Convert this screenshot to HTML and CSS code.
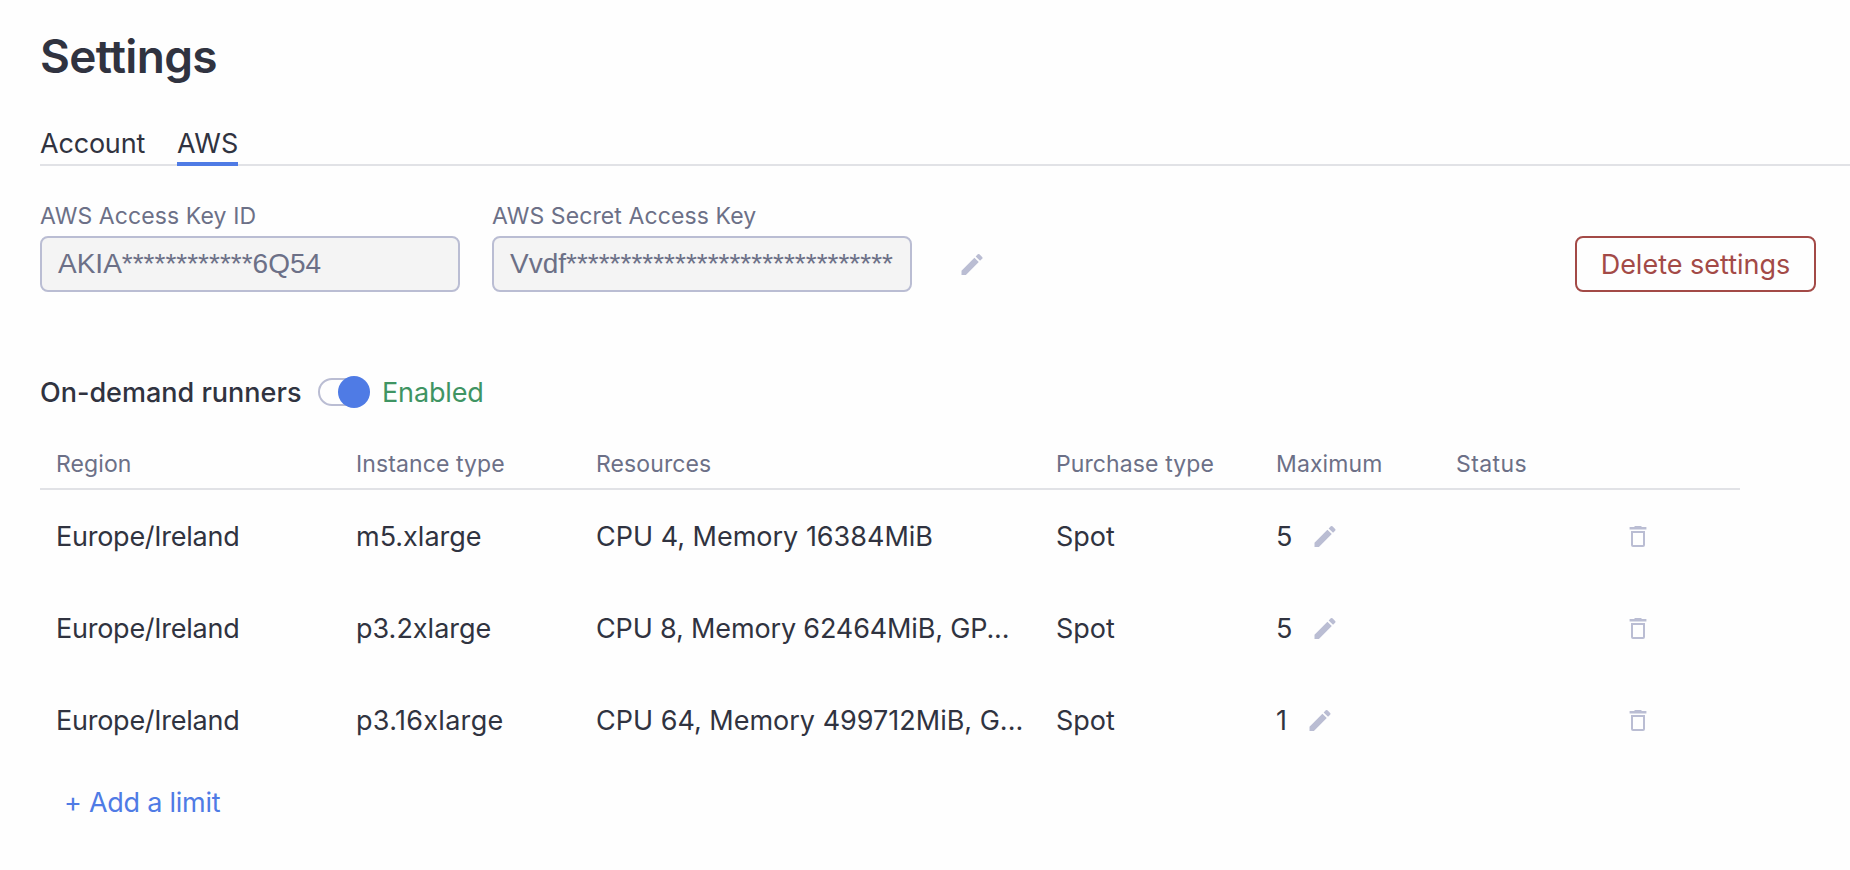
FILE: index.html
```html
<!DOCTYPE html>
<html lang="en">
<head>
<meta charset="utf-8">
<title>Settings</title>
<link rel="stylesheet" href="styles.css">
</head>
<body>
<svg class="defs" width="0" height="0">
  <symbol id="edit" viewBox="0 -0.43 24 24"><path d="M3 17.25V21h3.75L17.81 9.94l-3.75-3.75L3 17.25zM20.71 7.04a1 1 0 0 0 0-1.41l-2.34-2.34a1 1 0 0 0-1.41 0l-1.83 1.83 3.75 3.75 1.83-1.83z"/></symbol>
  <symbol id="trash" viewBox="0 0 28 28"><path fill-rule="evenodd" d="M11 3h6l1 1h4.4v2.4H5.6V4H10zM7 8h14v14a2 2 0 0 1-2 2H9a2 2 0 0 1-2-2zM9 10v12h10V10z"/></symbol>
</svg>
<main class="page">
  <h1 class="title">Settings</h1>
  <nav class="tabs">
    <a class="tab">Account</a>
    <a class="tab tab-active">AWS</a>
  </nav>
  <section class="keys">
    <label class="field"><span class="label">AWS Access Key ID</span><span class="input">AKIA************6Q54</span></label>
    <label class="field"><span class="label">AWS Secret Access Key</span><span class="input">Vvdf******************************</span></label>
    <span class="keys-edit"><svg class="icon"><use href="#edit"/></svg></span>
    <button class="delete">Delete settings</button>
  </section>
  <section class="runners">
    <h2 class="subtitle">On-demand runners</h2>
    <span class="switch"><span class="knob"></span></span>
    <span class="enabled">Enabled</span>
  </section>
  <section class="table">
    <div class="row head"><span>Region</span><span>Instance type</span><span>Resources</span><span>Purchase type</span><span>Maximum</span><span class="status">Status</span><span></span></div>
    <div class="row"><span class="region">Europe/Ireland</span><span>m5.xlarge</span><span class="clip">CPU 4, Memory 16384MiB</span><span>Spot</span><span class="max">5<svg class="icon"><use href="#edit"/></svg></span><span></span><span class="act"><svg class="icon"><use href="#trash"/></svg></span></div>
    <div class="row"><span class="region">Europe/Ireland</span><span>p3.2xlarge</span><span class="clip tight">CPU 8, Memory 62464MiB, GP...</span><span>Spot</span><span class="max">5<svg class="icon"><use href="#edit"/></svg></span><span></span><span class="act"><svg class="icon"><use href="#trash"/></svg></span></div>
    <div class="row"><span class="region">Europe/Ireland</span><span class="loose">p3.16xlarge</span><span class="clip">CPU 64, Memory 499712MiB, G...</span><span>Spot</span><span class="max">1<svg class="icon"><use href="#edit"/></svg></span><span></span><span class="act"><svg class="icon"><use href="#trash"/></svg></span></div>
  </section>
  <a class="add">+ Add a limit</a>
</main>
</body>
</html>
```
FILE: styles.css
```css
* { box-sizing: border-box; }
body {
  margin: 0;
  background: #fefefe;
  color: #303340;
  font: 400 27px/36px Inter, sans-serif;
  letter-spacing: 0;
  overflow: hidden;
}
.defs { display: block; height: 0; }
.page { padding: 27px 0 0 40px; }
.title { margin: 0; font-size: 46px; line-height: 58px; font-weight: 600; letter-spacing: -0.7px; }
.tabs { display: flex; gap: 32px; height: 46px; margin-top: 35px; border-bottom: 2px solid #e1e2e6; }
.tab { height: 46px; padding-top: 7px; line-height: 34px; letter-spacing: -0.2px; }
.tab-active { border-bottom: 4px solid #4f7be5; letter-spacing: 0.1px; }
.keys { display: flex; align-items: flex-end; margin-top: 34px; padding-right: 34px; }
.field { display: flex; flex-direction: column; width: 420px; margin-right: 32px; }
.label { font-size: 23px; line-height: 32px; height: 36px; color: #6c7087; letter-spacing: 0.1px; }
.input {
  height: 56px; padding: 0 16px; border: 2px solid #babdd3; border-radius: 8px;
  background: #f4f4f4; color: #6c7087;
  font: 28px/52px "Liberation Sans", sans-serif; letter-spacing: 0;
}
.icon { display: block; width: 28px; height: 28px; fill: #babdd3; flex: none; }
.keys-edit { margin: 0 0 14px 14px; }
.delete {
  height: 56px; width: 241px; margin-left: auto; padding: 1px 0 0; border: 2px solid #a34a47; border-radius: 8px;
  background: none; color: #a34a47; font: inherit; letter-spacing: 0;
}
.runners { display: flex; align-items: center; height: 36px; margin-top: 82px; }
.subtitle { margin: 0; padding-top: 1px; width: 278px; font-size: 27px; font-weight: 500; }
.switch { display: flex; align-items: center; justify-content: flex-end; width: 50px; height: 28px; border: 2px solid #babdd3; border-radius: 14px; }
.knob { flex: none; width: 32px; height: 32px; margin-right: -4px; border-radius: 50%; background: #4f7be5; }
.enabled { margin-left: 14px; padding-top: 1px; color: #3f9463; letter-spacing: -0.15px; }
.table { width: 1700px; margin-top: 34px; }
.row {
  display: grid; grid-template-columns: 300px 240px 460px 220px 180px 160px 1fr;
  align-items: center; height: 92px; padding: 2px 0 0 16px; white-space: nowrap;
}
.head { height: 46px; padding: 0 0 4px 16px; border-bottom: 2px solid #e1e2e6; color: #6c7087; font-size: 23px; letter-spacing: 0.1px; }
.status { letter-spacing: 0.4px; }
.region { letter-spacing: -0.25px; }
.loose { letter-spacing: 0.3px; }
.tight { letter-spacing: -0.15px; }
.clip { overflow: hidden; padding-right: 30px; }
.max { display: flex; align-items: center; gap: 19px; }
.max .icon { margin-top: -2px; }
.act { padding-left: 8px; }
.add { display: block; width: max-content; margin: 19px 0 0 24px; color: #4f7be5; letter-spacing: -0.25px; }
```
